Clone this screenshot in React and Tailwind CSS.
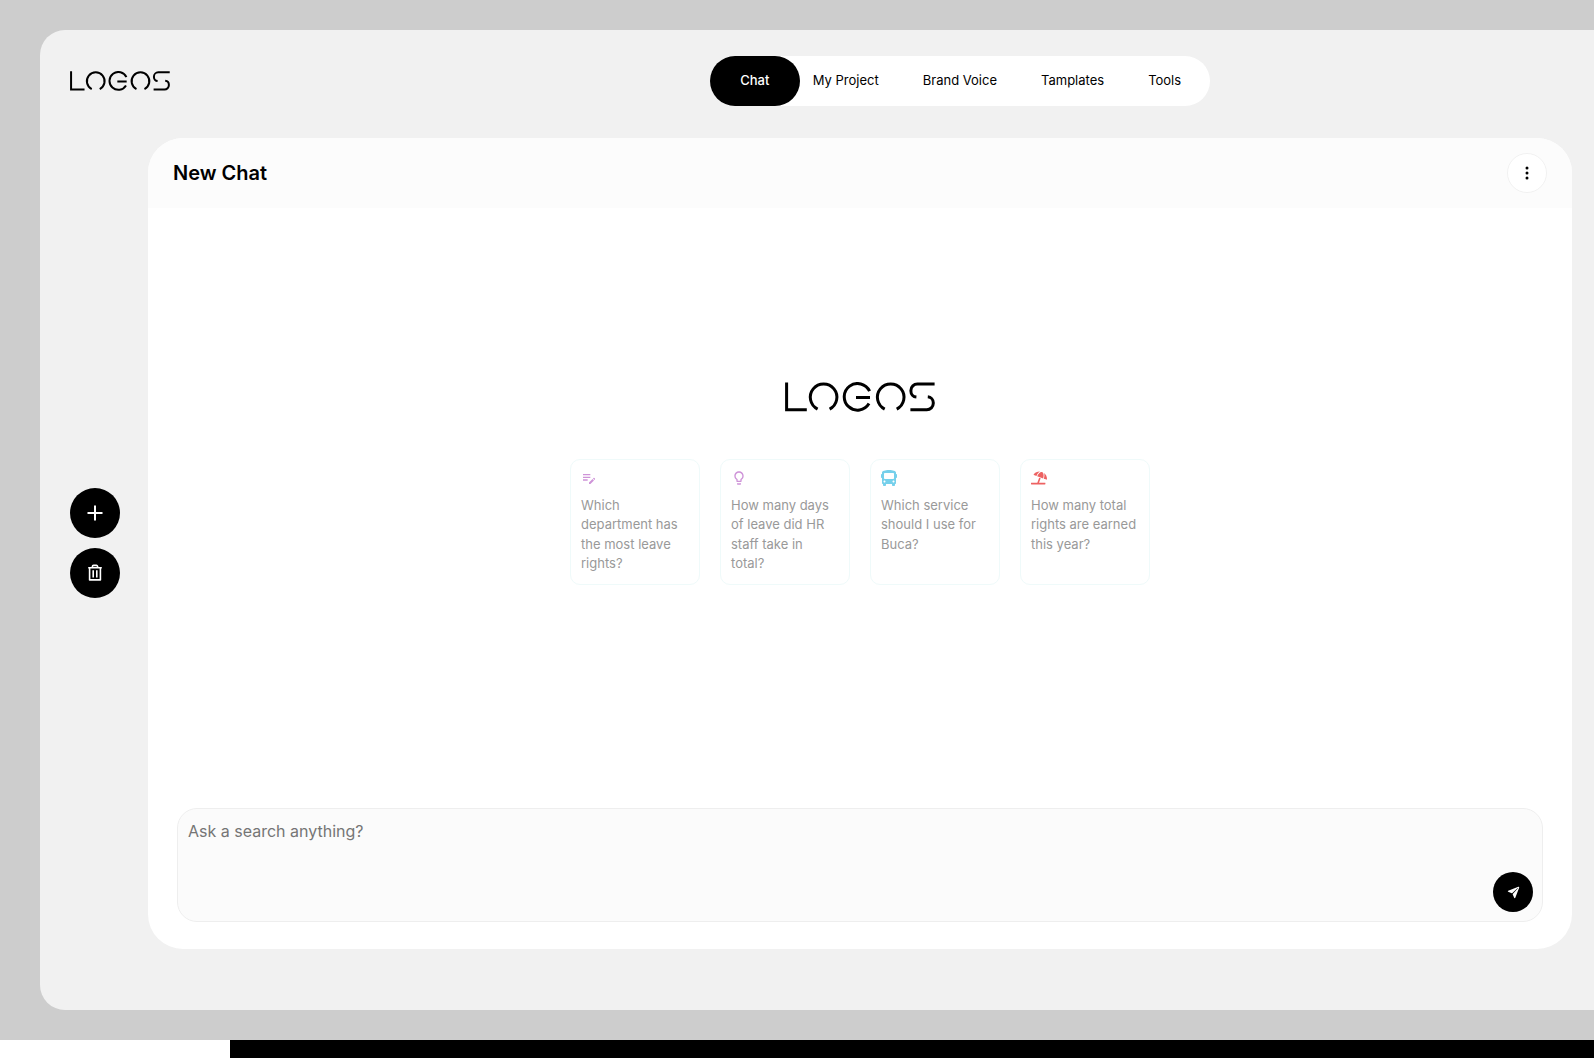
import React from "react";
import { MdEditNote, MdLightbulbOutline } from "react-icons/md";
import { FaBus, FaUmbrellaBeach } from "react-icons/fa";
import { IoMdAdd } from "react-icons/io";
import { BsThreeDotsVertical } from "react-icons/bs";
import { IoPaperPlane } from "react-icons/io5";

function Logo({ className }) {
  return (
    <svg viewBox="0 0 150 30" className={className} fill="none" stroke="currentColor" strokeWidth="3" role="img" aria-label="Logos">
      <path d="M1.6 0.4V27.8H21.8" />
      <path d="M32.6 27.1A13.3 13.3 0 1 1 44.6 27.1" />
      <path d="M84.6 9.2A13.3 13.3 0 1 0 84 21.6M71 15.6H85" />
      <path d="M99.7 27.1A13.3 13.3 0 1 1 111.7 27.1" />
      <path d="M149.6 2H132.4A6.5 6.5 0 0 0 125.9 8.5V9A6 6 0 0 0 131.4 15.1" />
      <path d="M142.8 14.8A6 6 0 0 1 148.3 20.8V21.3A6.5 6.5 0 0 1 141.8 27.8H125.4" />
    </svg>
  );
}

function TrashIcon() {
  return (
    <svg width="16" height="18" viewBox="0 0 16 18" fill="none" stroke="currentColor" strokeWidth="1.6" strokeLinejoin="round">
      <path d="M1.2 3.7H14.8M2.6 3.7V15.9H13.4V3.7M6.2 6.2V13.6M9.8 6.2V13.6" />
      <path d="M5.4 3.7V2.6A1.2 1.2 0 0 1 6.6 1.4H9.4A1.2 1.2 0 0 1 10.6 2.6V3.7" />
    </svg>
  );
}

const links = ["My Project", "Brand Voice", "Tamplates", "Tools"];

const prompts = [
  { icon: MdEditNote, color: "text-[#ce93d8]", text: "Which department has the most leave rights?" },
  { icon: MdLightbulbOutline, color: "text-[#ce93d8]", text: "How many days of leave did HR staff take in total?" },
  { icon: FaBus, color: "text-[#76d0eb]", text: "Which service should I use for Buca?" },
  { icon: FaUmbrellaBeach, color: "text-[#ed6262]", text: "How many total rights are earned this year?" },
];

export default function App() {
  return (
    <div className="flex min-h-screen flex-col bg-white font-['Inter',sans-serif] text-black">
      <div className="flex flex-1 flex-col bg-[#cdcdcd] py-[30px] pl-10">
        <div className="flex flex-1 flex-col rounded-l-[25px] bg-[#f1f1f1] pt-[26px] pb-[61px] pl-[30px]">
          <header className="grid grid-cols-[5fr_auto_3fr] items-center">
            <a href="#home">
              <Logo className="h-5 w-[100px]" />
            </a>
            <nav className="flex h-[50px] items-center rounded-full bg-white pr-[29px] text-[13px]">
              <a href="#chat" className="flex h-full w-[90px] items-center justify-center rounded-full bg-black font-medium text-white">
                Chat
              </a>
              <div className="ml-[13px] flex gap-11">
                {links.map((l) => (
                  <a key={l} href="#section" className="whitespace-nowrap">
                    {l}
                  </a>
                ))}
              </div>
            </nav>
          </header>

          <div className="mt-8 flex flex-1 gap-7 pr-[22px]">
            <aside className="flex flex-col justify-center gap-2.5 pb-0.5">
              <button aria-label="New chat" className="flex size-[50px] items-center justify-center rounded-full bg-black text-white">
                <IoMdAdd size={24} />
              </button>
              <button aria-label="Delete chat" className="flex size-[50px] items-center justify-center rounded-full bg-black text-white">
                <TrashIcon />
              </button>
            </aside>

            <main className="flex flex-1 flex-col overflow-hidden rounded-[35px] bg-white">
              <div className="flex h-[70px] items-center justify-between bg-[#fcfcfc] px-[25px]">
                <h1 className="text-xl font-semibold">New Chat</h1>
                <button aria-label="More options" className="flex size-10 items-center justify-center rounded-full border border-[#f1f1f1] bg-white">
                  <BsThreeDotsVertical size={16} />
                </button>
              </div>

              <div className="flex flex-1 flex-col items-center justify-center gap-[47px] pb-[50px]">
                <Logo className="h-[30px] w-[150px]" />
                <div className="flex gap-5">
                  {prompts.map(({ icon: Icon, color, text }) => (
                    <button key={text} className="flex w-[130px] flex-col gap-2.5 rounded-[10px] border border-[#effafa] p-2.5 text-left text-[13px] leading-normal text-[#999999]">
                      <Icon size={16} className={color} />
                      <span>{text}</span>
                    </button>
                  ))}
                </div>
              </div>

              <form className="mx-[29px] mb-[27px] flex h-[114px] items-end rounded-[20px] border border-[#eeeeee] bg-[#fbfbfb] p-[9px]">
                <textarea
                  aria-label="Message"
                  placeholder="Ask a search anything?"
                  className="h-full flex-1 resize-none bg-transparent p-px text-base outline-none placeholder:text-[#757575]"
                />
                <button type="button" aria-label="Send" className="flex size-10 items-center justify-center rounded-full bg-black text-white">
                  <IoPaperPlane size={13} />
                </button>
              </form>
            </main>
          </div>
        </div>
      </div>
      <div className="ml-[230px] h-[18px] bg-black" />
    </div>
  );
}
